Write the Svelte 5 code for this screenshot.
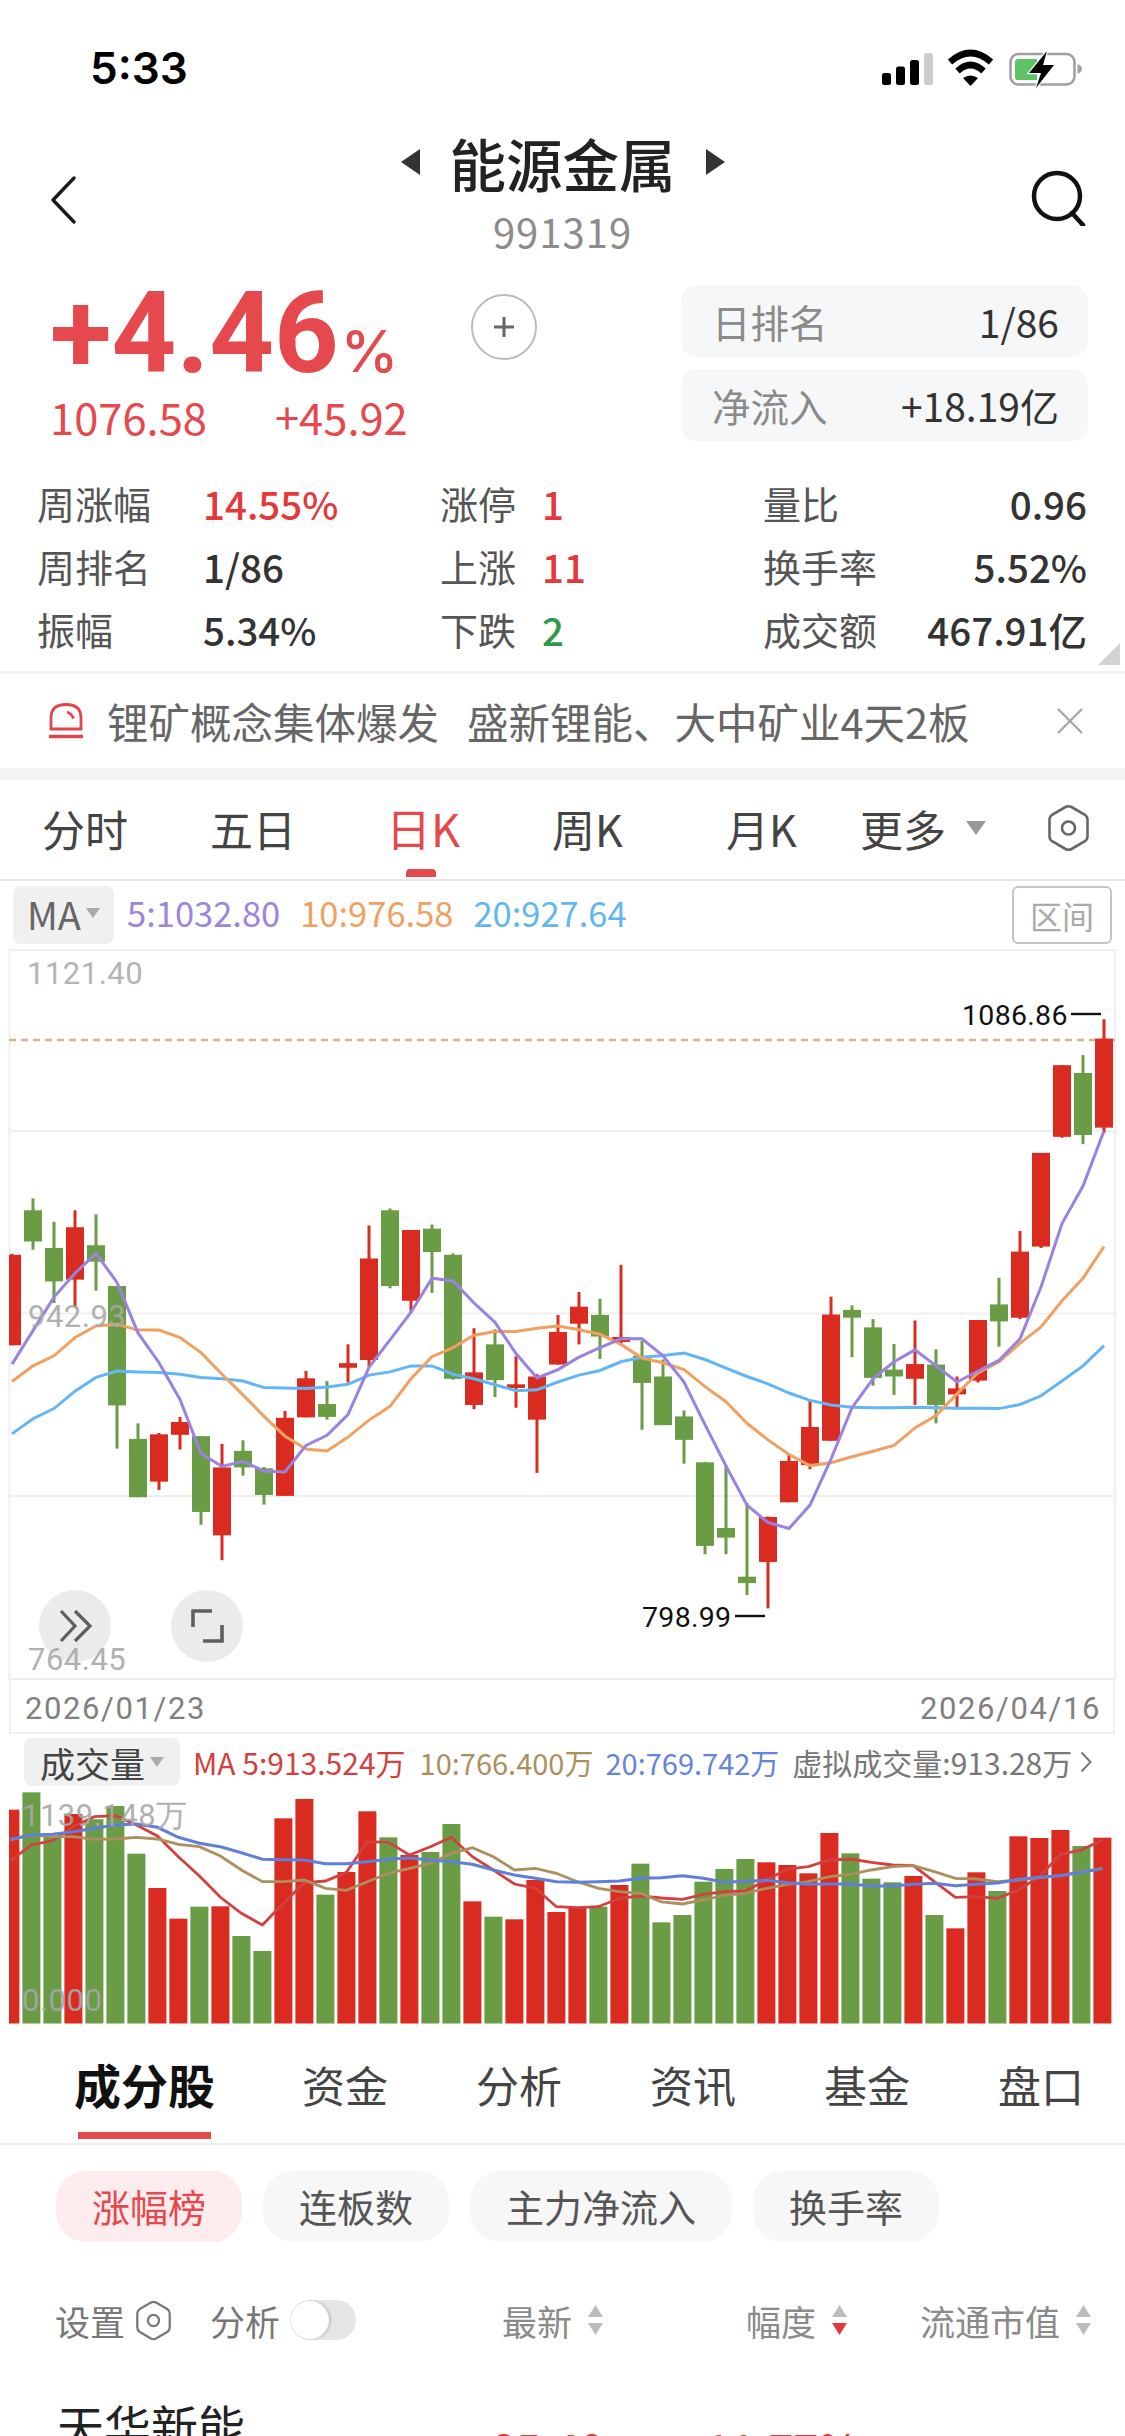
<script>
	// chart values are read in "raw" units and mapped to pixels below
	const cx = (i) => 12 + 21 * i;
	const ky = (z) => 51 + z / 2.178;
	const vx = (i) => 10.4 + 21 * i;
	const vy = (z) => z / 3 - 90;

	// [up, high, top, bottom, low]
	const candles = [
		[1, 553, 555, 752, 752], [0, 432, 458, 526, 544], [0, 483, 540, 613, 660], [1, 458, 495, 609, 670],
		[0, 467, 534, 570, 633], [0, 623, 623, 883, 977], [0, 922, 956, 1083, 1083], [1, 943, 946, 1049, 1067],
		[1, 908, 919, 947, 979], [0, 950, 950, 1115, 1143], [1, 967, 1018, 1166, 1220], [0, 959, 982, 1018, 1036],
		[0, 1017, 1020, 1078, 1099], [1, 895, 910, 1080, 1080], [1, 808, 824, 909, 909], [0, 830, 880, 908, 914],
		[1, 750, 791, 801, 833], [1, 491, 563, 784, 798], [0, 454, 458, 623, 628], [1, 501, 501, 655, 680],
		[0, 489, 498, 549, 638], [0, 552, 555, 825, 827], [1, 715, 811, 882, 891], [0, 717, 750, 828, 865],
		[1, 776, 837, 845, 888], [1, 815, 820, 914, 1030], [1, 686, 723, 794, 794], [1, 636, 668, 705, 750],
		[0, 651, 686, 733, 782], [1, 577, 734, 745, 748], [0, 742, 775, 834, 936], [0, 783, 820, 926, 926],
		[0, 894, 907, 958, 1010], [0, 1006, 1007, 1189, 1207], [0, 1013, 1150, 1171, 1207], [0, 1095, 1256, 1270, 1296],
		[1, 1125, 1126, 1224, 1325], [1, 990, 1004, 1094, 1094], [1, 873, 930, 1013, 1022], [1, 646, 685, 960, 960],
		[0, 665, 675, 692, 778], [0, 695, 713, 823, 840], [0, 749, 805, 820, 860], [1, 698, 793, 825, 882],
		[0, 761, 794, 882, 922], [1, 820, 846, 859, 888], [1, 697, 697, 829, 833], [0, 605, 663, 700, 755],
		[1, 503, 548, 692, 695], [1, 333, 333, 537, 540], [1, 142, 142, 298, 300], [0, 120, 159, 294, 314],
		[1, 42, 84, 278, 290]
	];

	const ma5 = [793, 720, 647, 595, 552, 615, 725, 790, 870, 988, 1016, 1005, 1026, 1028, 970, 948, 903, 800, 740, 680, 606, 612, 660, 702, 770, 823, 805, 778, 757, 738, 738, 775, 832, 925, 1015, 1100, 1138, 1151, 1100, 1000, 888, 825, 788, 762, 797, 832, 808, 785, 738, 625, 487, 405, 285];
	const ma10 = [831, 797, 775, 735, 710, 706, 719, 719, 735, 768, 815, 860, 907, 950, 978, 982, 952, 915, 885, 825, 777, 757, 730, 722, 722, 715, 710, 718, 728, 750, 780, 790, 805, 842, 875, 922, 958, 990, 1014, 1008, 995, 983, 970, 932, 905, 858, 812, 788, 748, 712, 655, 606, 537];
	const ma20 = [945, 912, 890, 852, 822, 808, 810, 811, 815, 822, 825, 830, 844, 845, 846, 843, 837, 817, 810, 797, 797, 815, 825, 838, 851, 849, 832, 817, 807, 788, 778, 774, 769, 783, 802, 820, 836, 856, 872, 882, 887, 888, 888, 887, 888, 889, 889, 890, 881, 862, 830, 797, 753];

	const volUp = candles.map((c) => c[0]);
	const vols = [329, 277, 410, 342, 358, 318, 461, 564, 656, 620, 619, 708, 753, 355, 297, 584, 516, 334, 412, 465, 456, 372, 604, 650, 658, 540, 636, 622, 620, 555, 491, 667, 645, 545, 507, 477, 487, 495, 520, 399, 460, 536, 547, 528, 645, 685, 517, 573, 409, 414, 390, 438, 413];
	const vma5 = [482, 435, 422, 380, 350, 347, 375, 408, 470, 528, 592, 640, 675, 610, 548, 543, 517, 425, 427, 465, 440, 412, 470, 510, 552, 565, 620, 623, 620, 595, 588, 594, 598, 583, 575, 573, 540, 507, 500, 480, 477, 487, 495, 497, 545, 592, 590, 595, 570, 530, 463, 450, 420];
	const vma10 = [420, 405, 410, 410, 418, 417, 412, 417, 433, 440, 468, 510, 545, 545, 540, 565, 571, 545, 520, 505, 490, 460, 443, 470, 510, 505, 520, 545, 565, 575, 580, 606, 612, 600, 586, 580, 565, 553, 545, 530, 523, 510, 500, 497, 515, 535, 537, 545, 540, 533, 527, 515, 505];
	const vma20 = [418, 405, 403, 395, 385, 375, 372, 382, 412, 430, 440, 458, 478, 479, 480, 491, 491, 485, 478, 474, 480, 485, 493, 510, 525, 535, 545, 547, 545, 543, 535, 533, 527, 535, 547, 544, 541, 548, 553, 552, 552, 558, 558, 553, 550, 557, 553, 549, 538, 532, 527, 517, 506];

	const kLine = (arr) => arr.map((z, i) => `${cx(i)},${ky(z).toFixed(1)}`).join(' ');
	const vLine = (arr) => arr.map((z, i) => `${vx(i)},${vy(z).toFixed(1)}`).join(' ');

	const stats = [
		['周涨幅', '14.55%', 'red', '涨停', '1', 'red', '量比', '0.96'],
		['周排名', '1/86', '', '上涨', '11', 'red', '换手率', '5.52%'],
		['振幅', '5.34%', '', '下跌', '2', 'green', '成交额', '467.91亿']
	];
	const periods = [
		{ name: '分时' },
		{ name: '五日' },
		{ name: '日K', active: true },
		{ name: '周K' },
		{ name: '月K' }
	];
	const subTabs = ['资金', '分析', '资讯', '基金', '盘口'];
	const chips = ['涨幅榜', '连板数', '主力净流入', '换手率'];
</script>

{#snippet hexIcon(w, h)}
	<svg class="hex" width={w} height={h} viewBox="0 0 41 48" fill="none" stroke="currentColor" stroke-width="2.6">
		<path d="M17.5 3 Q20.5 1.4 23.5 3 L36.5 10.5 Q39.5 12.4 39.5 15.5 V32.5 Q39.5 35.6 36.5 37.5 L23.5 45 Q20.5 46.6 17.5 45 L4.5 37.5 Q1.5 35.6 1.5 32.5 V15.5 Q1.5 12.4 4.5 10.5 Z" />
		<circle cx="20.5" cy="24" r="6.5" />
	</svg>
{/snippet}

{#snippet sortArrows(active)}
	<svg class="sort" width="17" height="32" viewBox="0 0 17 32">
		<path d="M8.5 1 L16 13 H1 Z" fill="#bdbdbd" />
		<path d="M8.5 31 L16 19 H1 Z" fill={active ? '#e5383b' : '#bdbdbd'} />
	</svg>
{/snippet}

<div class="page">
	<div class="status">
		<span class="time">5:33</span>
		<svg class="status-icons" width="215" height="48" viewBox="875 45 215 48">
			<rect x="882" y="73" width="9" height="12" rx="2.5" fill="#000" />
			<rect x="896" y="66.5" width="9" height="18.5" rx="2.5" fill="#000" />
			<rect x="910" y="60" width="9" height="25" rx="2.5" fill="#000" />
			<rect x="924" y="53" width="9" height="32" rx="2.5" fill="#ccc" />
			<path d="M950 62 Q970.5 44 991 62" fill="none" stroke="#000" stroke-width="6.5" />
			<path d="M957.5 71 Q970.5 59 983.5 71" fill="none" stroke="#000" stroke-width="6.5" />
			<path d="M963 78 Q970.5 73 978 78 L970.5 86 Z" fill="#000" />
			<rect x="1010.5" y="54" width="64" height="30.5" rx="8" fill="none" stroke="#a0a0a0" stroke-width="2.6" />
			<path d="M1015 62 Q1015 59 1018 59 H1037 V80 H1018 Q1015 80 1015 77 Z" fill="#5cc465" />
			<path d="M1077.5 64 Q1082 66 1082 69 Q1082 72 1077.5 74 Z" fill="#a0a0a0" />
			<path d="M1047 51 L1029 73 H1041 L1036 88 L1054 65 H1043 Z" fill="#000" stroke="#fff" stroke-width="2.5" paint-order="stroke" />
		</svg>
	</div>

	<header class="nav">
		<svg class="back" width="26" height="48" viewBox="0 0 26 48" fill="none" stroke="#1a1a1a" stroke-width="3.4">
			<path d="M24 2 L3 24 L24 46" stroke-linecap="round" stroke-linejoin="round" />
		</svg>
		<div class="nav-center">
			<div class="title-row">
				<span class="tri-left"></span>
				<span class="title">能源金属</span>
				<span class="tri-right"></span>
			</div>
			<div class="code">991319</div>
		</div>
		<svg class="search" width="56" height="56" viewBox="0 0 56 56" fill="none" stroke="#111" stroke-width="4.5">
			<circle cx="26" cy="26" r="23" />
			<path d="M41 43 L52 55" stroke-linecap="round" />
		</svg>
	</header>

	<section class="quote">
		<div class="price">
			<div class="change"><span class="pct">+4.46</span><span class="pct-sign">%</span></div>
			<div class="sub"><span>1076.58</span><span>+45.92</span></div>
		</div>
		<button class="add" aria-label="添加">
			<svg width="24" height="24" viewBox="0 0 24 24"><path d="M12 2 V22 M2 12 H22" stroke="#666" stroke-width="3" /></svg>
		</button>
		<div class="pills">
			<div class="pill"><span>日排名</span><b>1/86</b></div>
			<div class="pill"><span>净流入</span><b>+18.19亿</b></div>
		</div>
	</section>

	<section class="stats">
		{#each stats as row}
			<span class="lbl">{row[0]}</span>
			<span class="val {row[2]}">{row[1]}</span>
			<span class="lbl">{row[3]}</span>
			<span class="val {row[5]}">{row[4]}</span>
			<span class="lbl">{row[6]}</span>
			<span class="val end">{row[7]}</span>
		{/each}
		<span class="corner"></span>
	</section>

	<section class="notice">
		<svg class="bell" width="36" height="36" viewBox="0 0 36 36" fill="none" stroke="#e0474c" stroke-width="2.8">
			<path d="M3 26 V15 Q3 1.5 18 1.5 Q33 1.5 33 15 V26 Z" />
			<path d="M19 9 Q24 11 25.5 15.5" />
			<path d="M1 33.5 H35" stroke-width="3.6" />
		</svg>
		<span class="notice-text">锂矿概念集体爆发</span>
		<span class="notice-text second">盛新锂能、大中矿业4天2板</span>
		<svg class="close" width="28" height="28" viewBox="0 0 28 28"><path d="M2 2 L26 26 M26 2 L2 26" stroke="#a8a8a8" stroke-width="2.4" /></svg>
	</section>
	<div class="band"></div>

	<nav class="periods">
		{#each periods as p}
			<span class="period" class:active={p.active}>{p.name}{#if p.active}<i class="mark"></i>{/if}</span>
		{/each}
		<span class="more">更多<i class="caret"></i></span>
		<span class="gear">{@render hexIcon(41, 48)}</span>
	</nav>

	<div class="ma-row">
		<span class="ma-btn">MA<i class="caret small"></i></span>
		<span class="m5">5:1032.80</span>
		<span class="m10">10:976.58</span>
		<span class="m20">20:927.64</span>
		<span class="range">区间</span>
	</div>

	<svg class="kchart" width="1125" height="731" viewBox="0 0 1125 731">
		<defs>
			<clipPath id="plot"><rect x="9" y="0" width="1106" height="731" /></clipPath>
		</defs>
		<path d="M9.5 0 V731 M1115 0 V731 M9 1 H1115 M9 182 H1115 M9 364.5 H1115 M9 547 H1115 M9 730 H1115" stroke="#efefef" stroke-width="2" fill="none" />
		<path d="M9 91 H1115" stroke="#d0b690" stroke-width="2.4" stroke-dasharray="7 5" />
		<text class="axis" x="27" y="35">1121.40</text>
		<g clip-path="url(#plot)">
			{#each candles as c, i}
				<rect x={cx(i) - 1.5} y={ky(c[1])} width="3" height={ky(c[4]) - ky(c[1])} fill={c[0] ? '#d92b1f' : '#6a9c46'} />
				<rect x={cx(i) - 9} y={ky(c[2])} width="18" height={ky(c[3]) - ky(c[2])} fill={c[0] ? '#d92b1f' : '#6a9c46'} />
			{/each}
			<polyline points={kLine(ma20)} fill="none" stroke="#62b6f5" stroke-width="3" />
			<polyline points={kLine(ma10)} fill="none" stroke="#f0a060" stroke-width="3" />
			<polyline points={kLine(ma5)} fill="none" stroke="#9b82e0" stroke-width="3" />
		</g>
		<text class="axis over" x="28" y="378">942.93</text>
		<circle cx="75" cy="677" r="36" fill="#ebebeb" />
		<circle cx="207" cy="677" r="36" fill="#ebebeb" />
		<path d="M61 662 L75 677 L61 692 M75 662 L90 677 L75 692" fill="none" stroke="#5e5e5e" stroke-width="3.2" />
		<path d="M193 678 V662 H212 M222 676 V692 H203" fill="none" stroke="#5e5e5e" stroke-width="3.6" />
		<text class="axis over" x="28" y="721">764.45</text>
		<text class="mark-text" x="962" y="76">1086.86</text>
		<path d="M1071 65 H1101" stroke="#111" stroke-width="2.4" />
		<text class="mark-text" x="642" y="678">798.99</text>
		<path d="M735 667 H765" stroke="#111" stroke-width="2.4" />
	</svg>

	<div class="dates"><span>2026/01/23</span><span>2026/04/16</span></div>

	<div class="vol-head">
		<span class="vol-btn">成交量<i class="caret small"></i></span>
		<span class="v5">MA 5:913.524万</span>
		<span class="v10">10:766.400万</span>
		<span class="v20">20:769.742万</span>
		<span class="virtual">虚拟成交量:913.28万</span>
		<svg width="12" height="22" viewBox="0 0 12 22"><path d="M1.5 1.5 L10.5 11 L1.5 20.5" fill="none" stroke="#777" stroke-width="2" /></svg>
	</div>

	<svg class="vchart" width="1125" height="234" viewBox="0 0 1125 234">
		<defs>
			<clipPath id="volplot"><rect x="9" y="0" width="1106" height="234" /></clipPath>
		</defs>
		<g clip-path="url(#volplot)">
			{#each vols as v, i}
				<rect x={vx(i) - 9} y={vy(v)} width="18" height={233.5 - vy(v)} fill={volUp[i] ? '#d92b1f' : '#6a9c46'} />
			{/each}
			<polyline points={vLine(vma5)} fill="none" stroke="#d2413f" stroke-width="2.8" />
			<polyline points={vLine(vma10)} fill="none" stroke="#ad8f5f" stroke-width="2.8" />
			<polyline points={vLine(vma20)} fill="none" stroke="#5f7fd8" stroke-width="3" />
		</g>
		<text class="axis over" x="22" y="36">1139.148万</text>
		<text class="axis over" x="22" y="221">0.000</text>
	</svg>

	<nav class="sub-tabs">
		<span class="sub-active">成分股</span>
		{#each subTabs as t}
			<span>{t}</span>
		{/each}
	</nav>

	<div class="chips">
		{#each chips as c, i}
			<span class="chip" class:on={i === 0}>{c}</span>
		{/each}
	</div>

	<div class="list-head">
		<div class="head-left">
			<span>设置</span>
			<span class="gear-sm">{@render hexIcon(35, 41)}</span>
			<span class="analyse">分析</span>
			<span class="toggle"><i></i></span>
		</div>
		<div class="col">最新{@render sortArrows(false)}</div>
		<div class="col">幅度{@render sortArrows(true)}</div>
		<div class="col">流通市值{@render sortArrows(false)}</div>
	</div>

	<div class="list-row">
		<span class="name">天华新能</span>
		<span class="num red">85.40</span>
		<span class="num red">11.77%</span>
		<span class="num cap">576.00亿</span>
	</div>
</div>

<style>
	:global(body) {
		margin: 0;
		background: #fff;
	}

	.page {
		width: 1125px;
		height: 2436px;
		overflow: hidden;
		background: #fff;
		color: #333;
		font-family: 'Noto Sans CJK SC', 'Noto Sans', sans-serif;
	}

	/* Status bar */
	.status {
		height: 110px;
		display: flex;
		justify-content: space-between;
		align-items: flex-start;
		padding: 45px 35px 0 90px;
		box-sizing: border-box;
	}

	.time {
		font-family: Inter, sans-serif;
		font-weight: 600;
		font-size: 44px;
		line-height: 46px;
		color: #000;
	}

	/* Nav */
	.nav {
		height: 150px;
		position: relative;
		display: flex;
		justify-content: space-between;
		padding: 66px 38px 0 50px;
		box-sizing: border-box;
	}

	.search {
		margin-top: -6px;
	}

	.nav-center {
		position: absolute;
		left: 0;
		right: 0;
		top: 16px;
		display: flex;
		flex-direction: column;
		align-items: center;
	}

	.title-row {
		display: flex;
		align-items: center;
		height: 72px;
		gap: 30px;
	}

	.title {
		font-size: 56.5px;
		font-weight: 500;
		color: #222;
		line-height: 72px;
	}

	.tri-left,
	.tri-right {
		width: 0;
		height: 0;
		border-top: 13px solid transparent;
		border-bottom: 13px solid transparent;
	}

	.tri-left {
		border-right: 19px solid #333;
	}

	.tri-right {
		border-left: 19px solid #333;
	}

	.code {
		font-size: 40px;
		line-height: 50px;
		letter-spacing: 1px;
		color: #8c8c8c;
		margin-top: 8px;
	}

	/* Quote */
	.quote {
		height: 200px;
		display: flex;
		align-items: flex-start;
		position: relative;
		padding-left: 50px;
		box-sizing: border-box;
	}

	.price {
		width: 420px;
		color: #e5484d;
	}

	.change {
		display: flex;
		align-items: baseline;
		height: 120px;
		margin-top: 14px;
		line-height: 120px;
	}

	.pct {
		font-family: Roboto, sans-serif;
		font-size: 113px;
		font-weight: 700;
	}

	.pct-sign {
		font-family: Inter, sans-serif;
		font-size: 58px;
		font-weight: 500;
		margin-left: 2px;
	}

	.sub {
		display: flex;
		gap: 68px;
		font-size: 43.5px;
		line-height: 50px;
		margin-top: -2px;
	}

	.add {
		position: absolute;
		left: 471px;
		top: 34px;
		width: 66px;
		height: 66px;
		border-radius: 50%;
		border: 2px solid #bbb;
		background: #fff;
		padding: 0;
		display: flex;
		align-items: center;
		justify-content: center;
	}

	.pills {
		position: absolute;
		left: 681px;
		top: 25px;
		width: 407px;
		display: flex;
		flex-direction: column;
		gap: 12px;
	}

	.pill {
		height: 72px;
		border-radius: 16px;
		background: #f6f7f9;
		display: flex;
		align-items: center;
		justify-content: space-between;
		padding: 0 29px 0 31px;
		font-size: 38.5px;
		color: #8a8a8a;
	}

	.pill b {
		font-weight: 400;
		font-size: 39px;
		color: #333;
	}

	/* Stats */
	.stats {
		height: 214px;
		position: relative;
		display: grid;
		grid-template-columns: 166px 237px 102px 221px 120px 204px;
		grid-auto-rows: 63px;
		align-items: center;
		padding: 11px 0 0 37px;
		box-sizing: border-box;
		font-size: 38px;
		border-bottom: 3px solid #f0f0f0;
	}

	.lbl {
		color: #555;
		white-space: nowrap;
	}

	.val {
		font-size: 38.5px;
		font-weight: 500;
		color: #333;
		white-space: nowrap;
	}

	.val.end {
		justify-self: end;
	}

	.val.red {
		color: #e5383b;
	}

	.val.green {
		color: #2e9a4a;
	}

	.corner {
		position: absolute;
		right: 5px;
		bottom: 6px;
		width: 0;
		height: 0;
		border-left: 22px solid transparent;
		border-bottom: 22px solid #d2d2d2;
	}

	/* Notice */
	.notice {
		height: 94px;
		display: flex;
		align-items: center;
		padding-left: 48px;
		position: relative;
		font-size: 41.5px;
		color: #666;
	}

	.bell {
		margin-right: 23px;
	}

	.notice-text {
		white-space: nowrap;
	}

	.second {
		margin-left: 28px;
		font-size: 41.5px;
	}

	.close {
		margin-left: auto;
		margin-right: 41px;
	}

	.band {
		height: 12px;
		background: #f3f3f3;
	}

	/* Period tabs */
	.periods {
		height: 101px;
		display: grid;
		grid-template-columns: 168px 176px 166px 174px 134px 187px 1fr;
		align-items: center;
		padding: 0 36px 4px 42px;
		box-sizing: border-box;
		font-size: 43px;
		color: #444;
		border-bottom: 2px solid #e8e8e8;
	}

	.period {
		position: relative;
		white-space: nowrap;
	}

	.period.active {
		color: #e5484d;
		font-size: 45px;
	}

	.mark {
		position: absolute;
		left: 20px;
		top: 74px;
		width: 30px;
		height: 8px;
		border-radius: 4px 4px 0 0;
		background: #e5484d;
	}

	.more {
		display: flex;
		align-items: center;
		white-space: nowrap;
	}

	.caret {
		display: inline-block;
		width: 0;
		height: 0;
		margin-left: 20px;
		border-left: 10px solid transparent;
		border-right: 10px solid transparent;
		border-top: 14px solid #999;
	}

	.caret.small {
		margin-left: 5px;
		border-left-width: 7px;
		border-right-width: 7px;
		border-top-width: 10px;
		border-top-color: #aaa;
	}

	.gear {
		display: flex;
		justify-content: flex-end;
		color: #666;
	}

	.hex {
		display: block;
	}

	/* MA row */
	.ma-row {
		height: 68px;
		display: flex;
		align-items: center;
		padding: 4px 13px;
		box-sizing: border-box;
		font-size: 34.5px;
	}

	.ma-btn {
		width: 101px;
		height: 58px;
		border-radius: 8px;
		background: #f0f0f0;
		color: #666;
		display: flex;
		align-items: center;
		padding: 0 0 4px 14px;
		box-sizing: border-box;
		font-size: 38px;
		margin-right: 13px;
	}

	.m5,
	.m10,
	.m20 {
		padding-bottom: 6px;
	}

	.m5 {
		color: #9a86de;
		margin-right: 20px;
	}

	.m10 {
		color: #f0a060;
		margin-right: 20px;
	}

	.m20 {
		color: #62b6f0;
	}

	.range {
		margin-left: auto;
		width: 100px;
		height: 58px;
		box-sizing: border-box;
		border: 2px solid #c4c4c4;
		border-radius: 6px;
		color: #aaa;
		font-size: 32px;
		display: flex;
		align-items: center;
		justify-content: center;
	}

	/* Charts */
	.kchart,
	.vchart {
		display: block;
	}

	.axis {
		font-family: Roboto, sans-serif;
		font-size: 31px;
		letter-spacing: 0.5px;
		fill: #b4b4b4;
	}

	.axis.over {
		fill: #a8a8a8;
		opacity: 0.9;
	}

	.mark-text {
		font-family: Roboto, sans-serif;
		font-size: 28.5px;
		letter-spacing: 0.3px;
		fill: #111;
	}

	.dates {
		height: 54px;
		margin: 0 9px;
		padding: 4px 12px 0 14px;
		display: flex;
		justify-content: space-between;
		align-items: center;
		box-sizing: border-box;
		font-family: Roboto, sans-serif;
		font-size: 31px;
		letter-spacing: 1.6px;
		color: #808080;
		border-left: 2px solid #efefef;
		border-right: 2px solid #efefef;
		border-bottom: 2px solid #efefef;
		width: 1106px;
	}

	.vol-head {
		height: 56px;
		display: flex;
		align-items: center;
		padding-left: 24px;
		box-sizing: border-box;
		font-size: 30px;
		white-space: nowrap;
	}

	.vol-btn {
		width: 156px;
		height: 48px;
		border-radius: 8px;
		background: #f0f0f0;
		color: #444;
		font-size: 35px;
		display: flex;
		align-items: center;
		justify-content: center;
		margin-right: 13px;
	}

	.v5 {
		color: #d2413f;
		margin-right: 14px;
	}

	.v10 {
		color: #ad8f5f;
		font-size: 29px;
		margin-right: 12px;
	}

	.v20 {
		color: #6684d8;
		font-size: 29px;
		margin-right: 13px;
	}

	.virtual {
		color: #777;
		margin-right: 8px;
	}

	/* Sub tabs */
	.sub-tabs {
		height: 121px;
		display: flex;
		gap: 88px;
		align-items: center;
		padding: 0 0 0 74px;
		box-sizing: border-box;
		font-size: 43px;
		color: #444;
		border-bottom: 2px solid #eee;
		position: relative;
	}

	.sub-active {
		font-size: 47px;
		font-weight: 700;
		color: #111;
		position: relative;
		margin-right: -1px;
	}

	.sub-active::after {
		content: '';
		position: absolute;
		left: 4px;
		right: 4px;
		top: 83px;
		height: 7px;
		background: #e5484d;
	}

	.chips {
		height: 125px;
		display: flex;
		align-items: center;
		gap: 21px;
		padding: 0 0 2px 56px;
		box-sizing: border-box;
	}

	.chip {
		height: 71px;
		padding: 0 36px 3px;
		box-sizing: border-box;
		border-radius: 30px;
		background: #f7f7f7;
		color: #555;
		font-size: 38px;
		display: flex;
		align-items: center;
	}

	.chip.on {
		background: #fdeced;
		color: #e5484d;
	}

	/* List */
	.list-head {
		height: 100px;
		display: grid;
		grid-template-columns: 447px 244px 174px auto;
		align-items: center;
		padding-left: 55px;
		box-sizing: border-box;
		font-size: 35px;
		color: #8a8a8a;
	}

	.head-left {
		display: flex;
		align-items: center;
		color: #777;
	}

	.gear-sm {
		margin-left: 11px;
		color: #777;
	}

	.analyse {
		margin-left: 39px;
	}

	.toggle {
		width: 66px;
		height: 40px;
		margin-left: 10px;
		border-radius: 20px;
		background: #e6e6e6;
		position: relative;
	}

	.toggle i {
		position: absolute;
		left: 1px;
		top: 1px;
		width: 38px;
		height: 38px;
		border-radius: 50%;
		background: #fff;
		box-shadow: 2px 0 3px rgba(0, 0, 0, 0.15);
	}

	.col {
		display: flex;
		align-items: center;
		gap: 15px;
		white-space: nowrap;
	}

	.list-row {
		display: grid;
		grid-template-columns: 434px 214px 1fr;
		padding: 0 33px 0 57px;
		box-sizing: border-box;
		height: 110px;
	}

	.name {
		font-size: 47px;
		line-height: 60px;
		margin-top: 25px;
		color: #222;
		white-space: nowrap;
	}

	.num {
		font-size: 44px;
		font-weight: 500;
		line-height: 60px;
		margin-top: 48px;
		white-space: nowrap;
	}

	.num.red {
		color: #e5383b;
	}

	.cap {
		color: #333;
		justify-self: end;
	}
</style>
